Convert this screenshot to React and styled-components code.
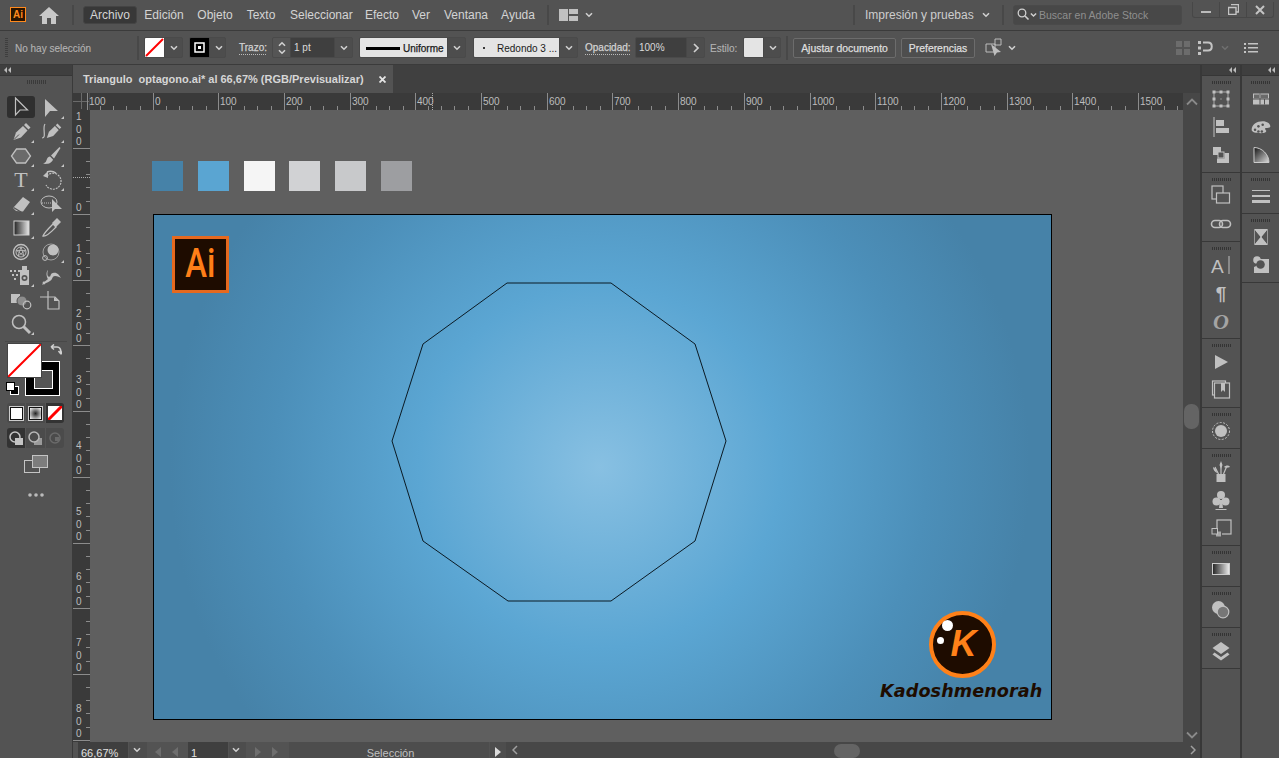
import React from "react";
import styled, { createGlobalStyle } from "styled-components";

const Global = createGlobalStyle`
  html, body { margin: 0; padding: 0; height: 100%; overflow: hidden; background: #535353; }
  #root { height: 100%; }
  * { box-sizing: border-box; }
`;
const FONT = `"Liberation Sans", Arial, sans-serif`;

const Shell = styled.div`
  width: 1279px; height: 758px; display: flex; flex-direction: column; overflow: hidden;
  background: #535353; font-family: ${FONT}; color: #cfcfcf;
`;

/* ---------- top menu ---------- */
const MenuBar = styled.header`
  height: 31px; flex: none; display: flex; align-items: center; background: #535353;
  border-bottom: 1px solid #3b3b3b; padding-bottom: 1px; position: relative;
`;
const AppBadge = styled.div`
  width: 16px; height: 15px; margin-left: 10px; border: 1px solid #ff8a1e; background: #2a1400; color: #ff8a1e;
  font-size: 10px; font-weight: 700; line-height: 13px; text-align: center;
`;
const Spaced = styled.div`
  flex: none; margin-left: ${p => p.$ml || 0}px; display: flex; align-items: center;
`;
const VRule = styled.div`
  flex: none; width: 2px; height: ${p => p.$h || 20}px; margin-left: ${p => p.$ml || 0}px; background: #484848;
`;
const MenuItem = styled.div`
  flex: none; font-size: 12px; line-height: 16px; height: 18px; padding-top: 1px; color: #d4d4d4;
  margin-left: ${p => p.$ml || 0}px; width: ${p => p.$w}px; white-space: nowrap; text-align: center;
  ${p => p.$active && `background:#383838;border:1px solid #444;border-radius:3px;padding-top:0;`}
`;
const WorkspaceLabel = styled.div`
  flex: none; font-size: 12px; color: #cdcdcd; margin-left: ${p => p.$ml}px; width: 108px; white-space: nowrap;
`;
const SearchBox = styled.div`
  flex: none; width: 169px; height: 20px; margin-left: 9px; border: 1px solid #4a4a4a; border-radius: 3px; background: #484848;
  display: flex; align-items: center; padding-left: 3px; font-size: 10.5px; color: #8f8f8f; white-space: nowrap;
`;
const WindowButtons = styled.div`
  flex: none; width: 82px; height: 16px; margin-left: 10px; margin-top: -9px; display: flex;
  border: 1px solid #474747; border-top: 0; border-radius: 0 0 3px 3px;
`;
const WindowButton = styled.div`
  flex: 1; display: flex; align-items: center; justify-content: center;
  & + & { border-left: 1px solid #474747; }
`;

/* ---------- control bar ---------- */
const ControlBar = styled.div`
  height: 34px; flex: none; display: flex; align-items: center; background: #535353; border-bottom: 1px solid #3b3b3b;
`;
const Grip = styled.div`
  flex: none; width: 3px; height: 20px; margin-left: 5px;
  background: repeating-linear-gradient(to bottom, #3e3e3e 0 1px, transparent 1px 2px);
`;
const ControlLabel = styled.div`
  flex: none; font-size: 10px; padding-top: 1px; color: ${p => p.$bold ? "#d2d2d2" : "#b4b4b4"};
  -webkit-text-stroke: ${p => p.$bold ? ".25px" : ".1px"} currentColor;
  margin-left: ${p => p.$ml}px; width: ${p => p.$w}px; white-space: nowrap;
  ${p => p.$dotted && `border-bottom:1px dotted #bbb;line-height:12px;`}
`;
const Drop = styled.div`
  flex: none; height: 21px; margin-left: ${p => p.$ml}px; width: ${p => p.$w}px; display: flex; align-items: stretch;
  border: 1px solid #4a4a4a; border-radius: 2px; background: #4d4d4d; overflow: hidden;
`;
const DropArrow = styled.div`
  flex: none; width: 18px; margin-left: auto; display: flex; align-items: center; justify-content: center;
  border-left: 1px solid #474747;
`;
const Swatch = styled.div`
  flex: none; width: 19px; display: flex; align-items: center; justify-content: center; background: ${p => p.$bg};
`;
const Stepper = styled.div`
  flex: none; width: 18px; display: flex; flex-direction: column; align-items: center; justify-content: center; gap: 2px;
  border-right: 1px solid #474747; background: #555;
`;
const FieldValue = styled.div`
  flex: 1; background: #3f3f3f; font-size: 10px; line-height: 19px; padding-left: 3px; color: #dadada;
`;
const LightCell = styled.div`
  flex: 1; background: #e4e4e4; color: #1a1a1a; font-size: 10px; padding-top: 1px;
  ${p => p.$b && `-webkit-text-stroke: .25px #1a1a1a;`}
  display: flex; align-items: center; white-space: nowrap; overflow: hidden;
`;
const Stroke = styled.div`
  flex: none; width: 34px; height: 3px; background: #000; margin: 0 3px 0 6px;
`;
const Dot = styled.div`
  flex: none; width: 2px; height: 2px; border-radius: 50%; background: #000; margin: 0 12px 0 9px;
`;
const CtlButton = styled.div`
  flex: none; height: 20px; width: ${p => p.$w}px; margin-left: 5px; border: 1px solid #6c6c6c; border-radius: 2px;
  font-size: 10.4px; line-height: 19px; -webkit-text-stroke: .25px #dedede; text-align: center; color: #dedede; background: #4e4e4e; white-space: nowrap;
`;

/* ---------- main ---------- */
const Main = styled.div`
  flex: 1; min-height: 0; display: flex; background: #3a3a3a;
`;
const ToolPanel = styled.aside`
  flex: none; width: 72px; margin-right: 1px; background: #535353; display: flex; flex-direction: column; align-items: stretch;
`;
const CollapseRow = styled.div`
  height: 11px; flex: none; background: #3f3f3f; border-bottom: 1px solid #363636; display: flex; align-items: center;
  justify-content: ${p => p.$right ? "flex-end" : "flex-start"}; padding: 0 ${p => p.$right ? "4px" : 0} 0 ${p => p.$right ? 0 : "4px"};
`;
const GripBar = styled.div`
  flex: none; width: ${p => p.$w || 19}px; height: 4px; margin: ${p => p.$my || "4px"} auto 0;
  background: repeating-linear-gradient(to right, #3a3a3a 0 1px, transparent 1px 2px);
`;
const ToolGrid = styled.div`
  display: grid; grid-template-columns: 28px 28px; grid-auto-rows: 24px; column-gap: 2px; margin: 12px 0 0 7px;
`;
const Tool = styled.div`
  position: relative; display: flex; align-items: center; justify-content: center; height: ${p => p.$sel ? 22 : 24}px;
  border-radius: 3px; background: ${p => p.$sel ? "#2f2f2f" : "transparent"}; color: #c0c0c0;
  ${p => p.$fly && `&::after{content:"";position:absolute;right:1px;bottom:1px;border-style:solid;border-width:0 0 3px 3px;border-color:transparent transparent #c6c6c6 transparent;}`}
`;
const ToolRule = styled.div`
  height: 1px; margin: 5px 5px 0; background: #484848; flex: none;
`;
const FillStroke = styled.div`
  position: relative; height: 54px; margin: 0 0 0 0; flex: none;
`;
const FillBox = styled.div`
  position: absolute; left: 7px; top: 1px; width: 35px; height: 35px; background: #fff; border: 1px solid #444; z-index: 2; overflow: hidden;
`;
const StrokeBox = styled.div`
  position: absolute; left: 25px; top: 19px; width: 35px; height: 35px; background: #000; border: 1px solid #fff;
  &::after { content: ""; position: absolute; left: 8px; top: 8px; width: 17px; height: 17px; border: 1px solid #fff; background: #555; }
`;
const Overlay = styled.div`
  position: absolute; left: ${p => p.$x}px; top: ${p => p.$y}px; display: flex;
`;
const ModeRow = styled.div`
  flex: none; height: 20px; margin: ${p => p.$mt}px 8px 0 7px; display: flex; border-radius: 3px; background: #4b4b4b; overflow: hidden;
`;
const ModeCell = styled.div`
  flex: 1; display: flex; align-items: center; justify-content: center; background: ${p => p.$on ? "#333" : "transparent"};
  & + & { border-left: 1px solid #555; }
`;
const MiniSwatch = styled.div`
  width: 13px; height: 13px; border: 1px solid #111; outline: 1px solid #ccc; background: ${p => p.$bg};
`;
const CenterIcon = styled.div`
  flex: none; display: flex; justify-content: center; margin-top: ${p => p.$mt}px;
`;

/* ---------- document ---------- */
const DocArea = styled.section`
  flex: 1; min-width: 0; display: flex; flex-direction: column; background: #5f5f5f;
`;
const TabBar = styled.div`
  flex: none; height: 28px; background: #404040; display: flex;
`;
const Tab = styled.div`
  width: 320px; background: #535353; display: flex; align-items: center; padding-left: 10px; font-size: 11px; font-weight: 700; color: #d6d6d6; white-space: pre;
`;
const TabClose = styled.span`
  margin-left: auto; margin-right: 7px; display: flex;
`;
const RulerRow = styled.div`
  flex: none; height: 17px; display: flex; background: #3a3a3a;
`;
const Workspace = styled.div`
  flex: 1; min-height: 0; display: flex;
`;
const VRulerWrap = styled.div`
  flex: none; width: 17px; background: #3a3a3a; overflow: hidden; display: flex;
`;
const Canvas = styled.main`
  flex: 1; min-width: 0; background: #5f5f5f; padding: 51px 0 0 62px; overflow: hidden;
`;
const Swatches = styled.div`
  display: flex; gap: 14.8px;
`;
const ColorChip = styled.div`
  width: 31px; height: 30px; background: ${p => p.$c}; flex: none;
`;
const Artboard = styled.div`
  position: relative; width: 899px; height: 506px; margin: 23px 0 0 1px; border: 1px solid #000;
  background: radial-gradient(circle 430px at 446px 252px, #88c0e2 0, #5ba6d3 42%, #4c8fb9 76%, #4682a8 100%);
`;
const Drawing = styled.svg`
  position: absolute; left: 0; top: 0; width: 897px; height: 504px;
`;
const AiLogo = styled.div`
  position: absolute; left: 18px; top: 21px; width: 57px; height: 57px; border: 3px solid #e5691f; background: #1e0c00;
  color: #ff7f18; font-size: 40px; line-height: 50px; text-align: center; font-family: Roboto, ${FONT}; font-weight: 500;
`;
const AiText = styled.span`
  display: inline-block; transform: scaleX(.82);
`;
const BrandCircle = styled.div`
  position: absolute; left: 775px; top: 396px; width: 67px; height: 67px; border-radius: 50%; border: 4px solid #ff8119; background: #1e0c00;
  color: #ff8119; font: italic 700 36px/57px "Liberation Sans", sans-serif; text-align: center; padding-left: 2px;
`;
const BrandDot = styled.div`
  position: absolute; left: ${p => p.$x}px; top: ${p => p.$y}px; width: ${p => p.$s}px; height: ${p => p.$s}px; border-radius: 50%; background: #fff;
`;
const BrandName = styled.div`
  position: absolute; left: 726px; top: 465px; font: italic 700 17.600px/22px "DejaVu Sans", sans-serif; color: #1e0c00; white-space: nowrap; letter-spacing: 0.1px;
`;
const VScroll = styled.div`
  flex: none; width: 17px; background: #474747; display: flex; flex-direction: column; align-items: center; position: relative;
`;
const ScrollThumbV = styled.div`
  position: absolute; top: 294px; left: 1px; width: 15px; height: 25px; border-radius: 7px; background: #646464;
`;
const StatusBar = styled.footer`
  flex: none; height: 16px; background: #535353; display: flex; font-size: 11px; color: #d2d2d2;
`;
const StatusField = styled.div`
  flex: none; width: ${p => p.$w}px; margin-left: ${p => p.$ml || 0}px; background: ${p => p.$bg || "#4d4d4d"}; padding: 5px 0 0 ${p => p.$pl || 3}px;
  line-height: 13px; white-space: nowrap; display: flex; justify-content: ${p => p.$c ? "center" : "flex-start"};
  gap: ${p => p.$gap || 0}px; color: ${p => p.$dim ? "#c0c0c0" : "#e2e2e2"};
`;
const HScroll = styled.div`
  flex: 1; position: relative; background: #474747; display: flex; align-items: center; justify-content: space-between; padding: 0 4px 0 6px;
`;
const ScrollThumbH = styled.div`
  position: absolute; left: 328px; top: 2px; width: 26px; height: 14px; border-radius: 7px; background: #646464;
`;

/* ---------- docks ---------- */
const Dock = styled.aside`
  flex: none; width: ${p => p.$w}px; border-left: 2px solid #383838; background: #535353; display: flex; flex-direction: column;
`;
const DockSection = styled.div`
  flex: none; display: flex; flex-direction: column; align-items: center; padding: 5px 0 3px; border-bottom: 1px solid #383838;
`;
const DockGrip = styled.div`
  flex: none; width: 19px; height: 3px; margin-bottom: 1px;
  background: repeating-linear-gradient(to right, #343434 0 1px, transparent 1px 2px);
`;
const DockCell = styled.div`
  flex: none; height: 28px; width: 100%; display: flex; align-items: center; justify-content: center; color: #c0c0c0;
`;

/* ---------- drawings ---------- */
const Chev = ({ c = "#d0d0d0", up, w = 8 }) => (
  <svg width={w} height="6" viewBox="0 0 8 6" style={{ flex: "none", transform: up ? "scaleY(-1)" : undefined }}>
    <path d="M1 1.200 4 4.200 7 1.200" fill="none" stroke={c} strokeWidth="1.600" />
  </svg>
);
const Collapse = () => (
  <svg width="7" height="6" viewBox="0 0 7 6"><path d="M3 0v6L0 3zM7 0v6L4 3z" fill="#bbb" /></svg>
);
const I = ({ children, s = 24 }) => (
  <svg width={s} height={s} viewBox="0 0 24 24" fill="currentColor" style={{ flex: "none" }}>{children}</svg>
);
const SerifGlyph = styled.text`
  font-family: "Liberation Serif", serif; fill: currentColor;
`;
const SansGlyph = styled.text`
  font-family: "Liberation Sans", sans-serif; fill: currentColor;
`;

const nib = "M4.500 20 7 12.500 14 6l4.500 4.500-6.500 7z";
const tools = [
  [<I><path d="M6.500 3v17l4.500-5h7.500z" fill="none" stroke="currentColor" strokeWidth="1.200" /></I>, 0, 1],
  [<I><path d="M6 3v18l5-6h8z" /></I>, 1],
  [<I><path d={nib} /><path d="M15 5l2-2 4.500 4.500-2 2z" /><path d="M5 19.500 10 14.500" stroke="#535353" fill="none" /></I>, 1],
  [<I><g transform="translate(4 1) scale(.85)"><path d={nib} /><path d="M15 5l2-2 4.500 4.500-2 2z" /></g><path d="M3 18c5 0 0-10 3-14" fill="none" stroke="currentColor" strokeWidth="1.200" /></I>, 1],
  [<I><path d="M7.500 5h9l5 7-5 7h-9l-5-7z" fill="#6a6a6a" stroke="currentColor" strokeWidth="1.300" /></I>, 1],
  [<I><path d="M20.500 3 12 11.500l3 3L21.500 4z" /><path d="M11 12.500c-3 .5-3 3-4 5-.6 1.400-2 1.500-3 2 3 1 8.500.5 10-4z" /></I>, 1],
  [<I><SerifGlyph x="12" y="19" fontSize="22" textAnchor="middle">T</SerifGlyph></I>, 1],
  [<I><path d="M8 8a8 8 0 1 1-1 9" fill="none" stroke="currentColor" strokeWidth="1.200" strokeDasharray="2 1" /><path d="M8 4a10 10 0 0 1 9 1" fill="none" stroke="currentColor" strokeWidth="1.400" /><path d="M4 8 9 3v7z" /></I>, 1],
  [<I><path d="M14 5 21 10 14 19.500 7 19 4 16z" /><path d="M4.500 15.500 12 20" stroke="#535353" strokeWidth="1.200" /></I>, 1],
  [<I><ellipse cx="10" cy="10" rx="8" ry="6" fill="none" stroke="currentColor" /><path d="M13 7 13 20l3-3 7 0z" /><path d="M3 11h10" stroke="currentColor" strokeDasharray="1 1" /></I>],
  [<I><defs><linearGradient id="gt"><stop offset="0" stopColor="#222" /><stop offset="1" stopColor="#e8e8e8" /></linearGradient></defs><rect x="5" y="5" width="15" height="14" fill="url(#gt)" stroke="#d0d0d0" /></I>, 1],
  [<I><path d="M4 20c1-3 8-10 10-12l3 3C14 14 8 21 4 20z" fill="none" stroke="currentColor" strokeWidth="1.300" /><path d="M13 7l5-5 4 4-5 5z" /></I>],
  [<I><circle cx="12" cy="12" r="7.500" fill="none" stroke="currentColor" strokeWidth="1.300" /><circle cx="12" cy="12" r="5" fill="none" stroke="currentColor" /><path d="M12 7l3 9L7.500 10.500h9L9 16z" fill="none" stroke="currentColor" strokeWidth=".8" /></I>],
  [<I><circle cx="14" cy="10" r="5.500" /><circle cx="6" cy="18" r="2.400" fill="none" stroke="currentColor" /><circle cx="12" cy="12" r="8" fill="none" stroke="currentColor" strokeWidth=".7" /></I>, 1],
  [<I><path d="M1 6h2v2H1zM5 6h2v2H5zM9 6h2v2H9zM3 10h2v2H3zM7 10h2v2H7zM5 14h2v2H5z" /><path d="M13 2h5v4h2v15H11V6h2z" /><circle cx="15.500" cy="14" r="3" fill="#535353" /><circle cx="15.500" cy="14" r="1.300" /></I>, 1],
  [<I><path d="M3 21c3-2 5-2 8-4s2-5 5-5 4 1 6 2c-2-3-4-6-8-5-3 .5-2 4-4 5-2-2-2-5-1-8C7 8 7 12 9 15c-2 2-5 3-6 6z" /><circle cx="10" cy="14" r="1.400" /><circle cx="5" cy="19" r="1.400" /></I>],
  [<I><rect x="2" y="6" width="9" height="9" /><circle cx="13" cy="13" r="5" fill="#8d8d8d" stroke="#535353" /><circle cx="18" cy="17" r="3.800" fill="none" stroke="currentColor" strokeWidth="1.200" /></I>],
  [<I><path d="M9 3v6H1M9 9h7l4 4v8H9z" fill="none" stroke="currentColor" strokeWidth="1.200" /><path d="M15 9l5 4h-5z" /></I>],
  [<I><circle cx="10" cy="10" r="6.500" fill="none" stroke="currentColor" strokeWidth="1.500" /><path d="M14.500 14.500 21 21" stroke="currentColor" strokeWidth="3" /></I>, 1],
];

const handles = [[5, 5], [12, 5], [19, 5], [5, 12], [19, 12], [5, 19], [12, 19], [19, 19]];
const TransformIcon = () => <I><rect x="5" y="5" width="14" height="14" fill="none" stroke="currentColor" strokeWidth=".8" />{handles.map(([x, y]) => <rect key={x + "-" + y} x={x - 1.500} y={y - 1.500} width="3" height="3" />)}<rect x="11.500" y="11.500" width="1" height="1" /></I>;
const AlignIcon = () => <I><path d="M5 2v20" stroke="currentColor" /><rect x="7" y="5" width="8" height="6" /><rect x="7" y="13" width="13" height="5" /></I>;
const PathfinderIcon = () => <I><rect x="4" y="4" width="8" height="8" /><rect x="9" y="9" width="6" height="6" fill="#535353" stroke="currentColor" /><path d="M15.500 10H20v10H8v-4.500h7.500z" /></I>;
const ArtboardsIcon = () => <I><rect x="3" y="2" width="11" height="13" fill="none" stroke="currentColor" strokeWidth="1.200" /><rect x="7.500" y="9" width="13" height="10" fill="#535353" stroke="currentColor" strokeWidth="1.200" /></I>;
const LinkIcon = () => <I><rect x="2.500" y="8.500" width="11" height="7" rx="3.500" fill="none" stroke="currentColor" strokeWidth="1.600" /><rect x="10.500" y="8.500" width="11" height="7" rx="3.500" fill="none" stroke="currentColor" strokeWidth="1.600" /></I>;
const CharIcon = () => <I><SansGlyph x="2" y="20" fontSize="19">A</SansGlyph><path d="M20 3v18" stroke="currentColor" /></I>;
const ParaIcon = () => <I><SansGlyph x="12" y="19" fontSize="19" fontWeight="700" textAnchor="middle">¶</SansGlyph></I>;
const OpenTypeIcon = () => <I><SerifGlyph x="12" y="20" fontSize="22" fontWeight="700" fontStyle="italic" textAnchor="middle" style={{ fill: "#a4a4a4" }}>O</SerifGlyph></I>;
const PlayIcon = () => <I><path d="M6 5v14l13-7z" /></I>;
const BookIcon = () => <I><rect x="3.500" y="3" width="13" height="14" fill="none" stroke="currentColor" strokeWidth="1.200" /><rect x="5.500" y="5" width="15" height="15" fill="#535353" stroke="currentColor" strokeWidth="1.200" /><path d="M12 5h4v9l-2-2-2 2z" /></I>;
const AppearanceIcon = () => <I><circle cx="12" cy="12" r="6" /><circle cx="12" cy="12" r="8.500" fill="none" stroke="currentColor" strokeDasharray="2 1.500" /></I>;
const BrushesIcon = () => <I><rect x="7.500" y="14" width="9" height="8" /><path d="M9.500 14 6 7M12 14V3M14.500 14l3-7" stroke="currentColor" strokeWidth="1.200" /><path d="M4 7c2 1 4 3 4 6-2-1-4-3-4-6zM12 1l1.500 4-1.500 4-1.500-4zM15 7c2-2 5-2 6 0-2 1-5 1-6 0z" /></I>;
const ClubIcon = () => <I><circle cx="12" cy="7" r="4" /><circle cx="7.500" cy="13.500" r="4" /><circle cx="16.500" cy="13.500" r="4" /><path d="M11 12h2l1 8h-4z" /><path d="M6.500 21.500h11" stroke="currentColor" /></I>;
const SymbolIcon = () => <I><rect x="8" y="4" width="14" height="14" fill="#535353" stroke="currentColor" strokeWidth="1.200" /><rect x="6.500" y="15" width="6" height="6" stroke="#535353" fill="#a8a8a8" /><rect x="3" y="12.500" width="5.500" height="5.500" fill="#535353" stroke="currentColor" /></I>;
const GradIcon = () => <I><defs><linearGradient id="gd"><stop offset="0" stopColor="#222" /><stop offset="1" stopColor="#eee" /></linearGradient></defs><rect x="3.500" y="6.500" width="17" height="11" fill="url(#gd)" stroke="#ccc" /></I>;
const TranspIcon = () => <I><circle cx="9.500" cy="9.500" r="6.500" /><circle cx="14" cy="14" r="5.800" fill="#777" stroke="currentColor" strokeWidth="1.200" /></I>;
const LayersIcon = () => <I><path d="M12 3 20.500 9 12 15 3.500 9z" /><path d="M5.500 13.500 12 18l6.500-4.500 2 2L12 21.500 3.500 15.500z" /></I>;
const TableIcon = () => <I><path d="M4 6.500h16v11H4z" /><path d="M11 6.500v11M15.500 12v5.500M4 12h16" stroke="#535353" /><rect x="5" y="7.500" width="5" height="4" fill="#6a6a6a" /><rect x="12" y="7.500" width="7" height="4" fill="#6a6a6a" /></I>;
const PaletteIcon = () => <I><g transform="translate(1.800 2) scale(.85)"><path d="M1 15c0-6 6-10 13-10 5 0 9 3 9 6 0 2-3 2-5 2s-1 2 0 3c1 2-2 3-6 3-6 0-11-1-11-4z" /><circle cx="5" cy="15" r="1.500" fill="#535353" /><circle cx="9" cy="17" r="1.500" fill="#535353" /><circle cx="13" cy="17" r="1.500" fill="#535353" /><circle cx="9" cy="11" r="1.500" fill="#535353" /><circle cx="14" cy="9" r="1.500" fill="#535353" /></g></I>;
const GuideIcon = () => <I><defs><linearGradient id="gg" x1="0" y1="0" x2="1" y2="1"><stop offset="0" stopColor="#111" /><stop offset="1" stopColor="#ddd" /></linearGradient></defs><path d="M5 4.500c8 0 15 7 15 15H5z" fill="url(#gg)" stroke="#ccc" /></I>;
const LinesIcon = () => <I><rect x="3" y="6" width="18" height="1" /><rect x="3" y="11" width="18" height="2" /><rect x="3" y="16" width="18" height="3" /></I>;
const HourglassIcon = () => <I><path d="M5.500 4h13L12 12zM5.500 20h13L12 12z" /><path d="M5.500 4l13 16M18.500 4 5.500 20" stroke="#ddd" strokeWidth=".6" /><path d="M5.500 4v16M18.500 4v16" stroke="#999" /></I>;
const MergeIcon = () => <I><path d="M9 6h11v14H5v-6a6 6 0 0 0 4-8z" /><circle cx="8" cy="7" r="3.800" /><circle cx="11.500" cy="11.500" r="4.300" fill="#535353" /></I>;

const dock1 = [
  [<TransformIcon />, <AlignIcon />, <PathfinderIcon />],
  [<ArtboardsIcon />, <LinkIcon />],
  [<CharIcon />, <ParaIcon />, <OpenTypeIcon />],
  [<PlayIcon />, <BookIcon />],
  [<AppearanceIcon />],
  [<BrushesIcon />, <ClubIcon />, <SymbolIcon />],
  [<GradIcon />],
  [<TranspIcon />],
  [<LayersIcon />],
];
const dock2 = [
  [<TableIcon />, <PaletteIcon />, <GuideIcon />],
  [<LinesIcon />],
  [<HourglassIcon />, <MergeIcon />],
];

const SCALE = 65.7;
const hMarks = Array.from({ length: 17 }, (_, i) => i - 1);
const RulerH = () => (
  <svg width="1110" height="17" style={{ flex: "none", display: "block" }}>
    <path d="M0 8.500h16M8.500 0v16" stroke="#6a6a6a" />
    <path d="M16.500 0v17" stroke="#4a4a4a" />
    {hMarks.map(k => {
      const x = Math.round(79.500 + k * SCALE);
      return (
        <g key={k}>
          <path d={`M${x + 0.5} 0v17`} stroke="#8c8c8c" />
          {[1, 2, 3, 4].map(t => {
            const tx = Math.round(x + (t * SCALE) / 5);
            return tx < 1110 ? <path key={t} d={`M${tx + 0.5} 13v4`} stroke="#8c8c8c" /> : null;
          })}
          <text x={x + 2} y="12" fontSize="10" fill="#bdbdbd" fontFamily={FONT}>{Math.abs(k * 100)}</text>
        </g>
      );
    })}
    <path d="M359.500 0v17" stroke="#aaa" strokeDasharray="1 1" />
  </svg>
);
const vMarks = Array.from({ length: 10 }, (_, i) => i - 1);
const RulerV = () => (
  <svg width="17" height="632" style={{ flex: "none", display: "block" }}>
    {vMarks.map(k => {
      const y = Math.round(104 + k * SCALE);
      const digits = String(Math.abs(k * 100)).split("");
      return (
        <g key={k}>
          <path d={`M0 ${y + 0.5}h17`} stroke="#8c8c8c" />
          {[1, 2, 3, 4].map(t => <path key={t} d={`M13 ${Math.round(y + (t * SCALE) / 5) + 0.5}h4`} stroke="#8c8c8c" />)}
          {digits.map((d, i) => (
            <text key={i} x="3" y={y - 3 - (digits.length - 1 - i) * 12.5} fontSize="10" fill="#bdbdbd" fontFamily={FONT}>{d}</text>
          ))}
        </g>
      );
    })}
    <path d="M0 67.500h17" stroke="#aaa" strokeDasharray="1 1" />
  </svg>
);

const Tri = ({ dir = "r", on }) => (
  <svg width="8" height="10" viewBox="0 0 8 10" style={{ flex: "none", transform: dir === "l" ? "scaleX(-1)" : undefined }}>
    <path d="M1 0v10l6-5z" fill={on ? "#dcdcdc" : "#6e6e6e"} />
  </svg>
);

export default function App() {
  return (
    <Shell>
      <Global />
      <MenuBar>
        <AppBadge>Ai</AppBadge>
        <Spaced $ml={13}>
          <svg width="20" height="18" viewBox="0 0 20 18"><path d="M10 1 0 10h3v8h5v-6h4v6h5v-8h3z" fill="#c8c8c8" /></svg>
        </Spaced>
        <VRule $ml={13} />
        <MenuItem $active $ml={9} $w={54}>Archivo</MenuItem>
        <MenuItem $ml={6} $w={42}>Edición</MenuItem>
        <MenuItem $ml={11} $w={38}>Objeto</MenuItem>
        <MenuItem $ml={11} $w={32}>Texto</MenuItem>
        <MenuItem $ml={13} $w={62}>Seleccionar</MenuItem>
        <MenuItem $ml={12} $w={36}>Efecto</MenuItem>
        <MenuItem $ml={11} $w={20}>Ver</MenuItem>
        <MenuItem $ml={12} $w={46}>Ventana</MenuItem>
        <MenuItem $ml={11} $w={36}>Ayuda</MenuItem>
        <VRule $ml={11} />
        <Spaced $ml={10}>
          <svg width="19" height="14" viewBox="0 0 19 14"><path d="M0 1h9v12H0zM10 1h9v5h-9zM10 8h9v5h-9z" fill="#c0c0c0" /></svg>
        </Spaced>
        <Spaced $ml={7}><Chev /></Spaced>
        <VRule $ml={260} />
        <WorkspaceLabel $ml={10}>Impresión y pruebas</WorkspaceLabel>
        <Spaced $ml={9}><Chev /></Spaced>
        <VRule $ml={12} />
        <SearchBox>
          <svg width="13" height="13" viewBox="0 0 13 13" style={{ flex: "none" }}><circle cx="5" cy="5" r="3.800" fill="none" stroke="#d0d0d0" strokeWidth="1.300" /><path d="M8 8l3.500 3.500" stroke="#d0d0d0" strokeWidth="1.600" /></svg>
          <Chev w={7} />
          <span style={{ marginLeft: 2 }}>Buscar en Adobe Stock</span>
        </SearchBox>
        <WindowButtons>
          <WindowButton><svg width="10" height="10" viewBox="0 0 10 10"><rect y="6" width="10" height="2" fill="#bbb" /></svg></WindowButton>
          <WindowButton><svg width="11" height="11" viewBox="0 0 11 11"><path d="M3 .5h7.500V8H8M.5 3.500H8V10.500H.5z" fill="none" stroke="#c4c4c4" strokeWidth="1.400" /></svg></WindowButton>
          <WindowButton><svg width="10" height="10" viewBox="0 0 10 10"><path d="M1 1l8 8M9 1 1 9" stroke="#c4c4c4" strokeWidth="2" /></svg></WindowButton>
        </WindowButtons>
      </MenuBar>

      <ControlBar>
        <Grip />
        <ControlLabel $ml={7} $w={115}>No hay selección</ControlLabel>
        <VRule $ml={7} $h={24} />
        <Drop $ml={5} $w={39}>
          <Swatch $bg="#fff"><svg width="19" height="19"><path d="M1 18 18 1" stroke="#f00" strokeWidth="2" /></svg></Swatch>
          <DropArrow><Chev /></DropArrow>
        </Drop>
        <Drop $ml={6} $w={37}>
          <Swatch $bg="#000"><svg width="11" height="11"><rect x="1" y="1" width="9" height="9" fill="none" stroke="#fff" strokeWidth="1.500" /><rect x="4" y="4" width="3" height="3" fill="#fff" /></svg></Swatch>
          <DropArrow><Chev /></DropArrow>
        </Drop>
        <ControlLabel $ml={13} $w={27} $bold $dotted>Trazo:</ControlLabel>
        <Drop $ml={6} $w={81}>
          <Stepper><Chev up /><Chev /></Stepper>
          <FieldValue>1 pt</FieldValue>
          <DropArrow style={{ background: "#4d4d4d" }}><Chev /></DropArrow>
        </Drop>
        <Drop $ml={6} $w={107}>
          <LightCell $b><Stroke />Uniforme</LightCell>
          <DropArrow><Chev /></DropArrow>
        </Drop>
        <Drop $ml={7} $w={105}>
          <LightCell><Dot />Redondo 3 ...</LightCell>
          <DropArrow><Chev /></DropArrow>
        </Drop>
        <ControlLabel $ml={7} $w={45} $bold $dotted>Opacidad:</ControlLabel>
        <Drop $ml={5} $w={70}>
          <FieldValue>100%</FieldValue>
          <DropArrow><svg width="6" height="10" viewBox="0 0 6 10"><path d="M1 1l4 4-4 4" fill="none" stroke="#d0d0d0" strokeWidth="1.600" /></svg></DropArrow>
        </Drop>
        <ControlLabel $ml={5} $w={27}>Estilo:</ControlLabel>
        <Drop $ml={6} $w={38}>
          <Swatch $bg="#e4e4e4" />
          <DropArrow><Chev /></DropArrow>
        </Drop>
        <VRule $ml={5} $h={24} />
        <CtlButton $w={103}>Ajustar documento</CtlButton>
        <CtlButton $w={74}>Preferencias</CtlButton>
        <Spaced $ml={10}>
          <svg width="18" height="19" viewBox="0 0 18 19"><path d="M1 6h9v8H1zM10 1h6v6h-6z" fill="none" stroke="#bdbdbd" /><path d="M6 6l10 8-4 .5L9.500 18z" fill="#bdbdbd" /></svg>
        </Spaced>
        <Spaced $ml={5}><Chev /></Spaced>
        <Spaced $ml={160}>
          <svg width="14" height="14" viewBox="0 0 14 14"><path d="M0 0h6v6H0zM8 0h6v6H8zM0 8h6v6H0zM8 8h6v6H8z" fill="#6c6c6c" /></svg>
        </Spaced>
        <Spaced $ml={8}>
          <svg width="16" height="16" viewBox="0 0 16 16"><path d="M0 1h3v3H0zM0 6.500h3v3H0zM0 12h3v3H0z" fill="#c4c4c4" /><path d="M5 2.500h5c5 0 5 8 0 8H5" fill="none" stroke="#c4c4c4" strokeWidth="2" /></svg>
        </Spaced>
        <Spaced $ml={7}><Chev c="#6f6f6f" /></Spaced>
        <Spaced $ml={15}>
          <svg width="14" height="12" viewBox="0 0 14 12"><path d="M0 1h2v2H0zM4 1h10v1.500H4zM0 5h2v2H0zM4 5h10v1.500H4zM0 9h2v2H0zM4 9h10v1.500H4z" fill="#c4c4c4" /></svg>
        </Spaced>
      </ControlBar>

      <Main>
        <ToolPanel>
          <CollapseRow><Collapse /></CollapseRow>
          <GripBar />
          <ToolGrid>
            {tools.map(([icon, fly, sel], i) => <Tool key={i} $fly={fly} $sel={sel}>{icon}</Tool>)}
          </ToolGrid>
          <ToolRule />
          <FillStroke>
            <FillBox><svg width="33" height="33"><path d="M0 33 33 0" stroke="#f00" strokeWidth="2" /></svg></FillBox>
            <StrokeBox />
            <Overlay $x={50} $y={2}>
              <svg width="12" height="13" viewBox="0 0 12 13"><path d="M1 3h6c3 0 4 2 4 6M1 3l3-2.500M1 3l3 2.500M11 10l-2.500-3M11 10l2-3" fill="none" stroke="#d0d0d0" strokeWidth="1.600" /></svg>
            </Overlay>
            <Overlay $x={6} $y={40}>
              <svg width="13" height="13" viewBox="0 0 13 13"><rect x="4.500" y="4.500" width="8" height="8" fill="#000" stroke="#fff" /><rect x=".5" y=".5" width="8" height="8" fill="#fff" stroke="#000" /></svg>
            </Overlay>
          </FillStroke>
          <ModeRow $mt={7}>
            <ModeCell><MiniSwatch $bg="#fff" /></ModeCell>
            <ModeCell><MiniSwatch $bg="radial-gradient(circle,#222,#fff)" /></ModeCell>
            <ModeCell $on><svg width="14" height="14"><rect width="14" height="14" fill="#fff" /><path d="M0 14 14 0" stroke="#f00" strokeWidth="3" /></svg></ModeCell>
          </ModeRow>
          <ModeRow $mt={5}>
            <ModeCell $on><svg width="14" height="14"><circle cx="6" cy="6" r="5" fill="none" stroke="#c4c4c4" strokeWidth="1.500" /><rect x="6" y="7" width="8" height="7" fill="#c4c4c4" /></svg></ModeCell>
            <ModeCell><svg width="14" height="14"><rect x="6" y="7" width="8" height="7" fill="#9a9a9a" /><circle cx="6" cy="6" r="5" fill="#4b4b4b" stroke="#b8b8b8" strokeWidth="1.500" /></svg></ModeCell>
            <ModeCell><svg width="14" height="14"><circle cx="7" cy="7" r="5" fill="none" stroke="#6a6a6a" strokeWidth="1.500" /><rect x="7" y="6" width="4" height="4" fill="#6a6a6a" /></svg></ModeCell>
          </ModeRow>
          <CenterIcon $mt={7}>
            <svg width="24" height="18" viewBox="0 0 24 18"><rect x=".5" y="5.500" width="15" height="12" fill="none" stroke="#c4c4c4" /><rect x="8.500" y=".5" width="15" height="12" fill="#7d7d7d" stroke="#c4c4c4" /></svg>
          </CenterIcon>
          <CenterIcon $mt={20}>
            <svg width="16" height="4" viewBox="0 0 16 4"><circle cx="2" cy="2" r="1.800" fill="#bbb" /><circle cx="8" cy="2" r="1.800" fill="#bbb" /><circle cx="14" cy="2" r="1.800" fill="#bbb" /></svg>
          </CenterIcon>
        </ToolPanel>

        <DocArea>
          <TabBar>
            <Tab>
              Triangulo  optagono.ai* al 66,67% (RGB/Previsualizar)
              <TabClose><svg width="7" height="7" viewBox="0 0 7 7"><path d="M.5.5l6 6M6.500.5l-6 6" stroke="#e4e4e4" strokeWidth="1.800" /></svg></TabClose>
            </Tab>
          </TabBar>
          <RulerRow>
            <RulerH />
            <VScroll><svg width="12" height="8" viewBox="0 0 12 8" style={{ marginTop: 5 }}><path d="M1 6.500 6 1.500l5 5" fill="none" stroke="#8a8a8a" strokeWidth="1.800" /></svg></VScroll>
          </RulerRow>
          <Workspace>
            <VRulerWrap><RulerV /></VRulerWrap>
            <Canvas>
              <Swatches>
                {["#4682a8", "#5aa5d2", "#f5f5f5", "#d1d2d4", "#c8c9cb", "#9d9ea1"].map(c => <ColorChip key={c} $c={c} />)}
              </Swatches>
              <Artboard>
                <Drawing viewBox="0 0 897 504">
                  <polygon points="353,68 457,68 541,129 572,226 541,326 457,386 354,386 269,326 238,226 269,129" fill="none" stroke="#0b1a24" strokeWidth="1" />
                </Drawing>
                <AiLogo><AiText>Ai</AiText></AiLogo>
                <BrandCircle>K<BrandDot $x={9} $y={5} $s={11} /><BrandDot $x={4} $y={22} $s={7} /></BrandCircle>
                <BrandName>Kadoshmenorah</BrandName>
              </Artboard>
            </Canvas>
            <VScroll>
              <ScrollThumbV />
              <svg width="12" height="8" viewBox="0 0 12 8" style={{ marginTop: "auto", marginBottom: 3 }}><path d="M1 1.500 6 6.500l5-5" fill="none" stroke="#8a8a8a" strokeWidth="1.800" /></svg>
            </VScroll>
          </Workspace>
          <StatusBar>
            <StatusField $ml={5} $w={50} $bg="#3f3f3f">66,67%</StatusField>
            <StatusField $ml={1} $w={18} $pl={4}><Chev /></StatusField>
            <StatusField $ml={5} $w={36} $bg="transparent" $pl={2} $gap={9}><Tri dir="l" /><Tri dir="l" /></StatusField>
            <StatusField $w={40} $bg="#3f3f3f" $pl={3}>1</StatusField>
            <StatusField $ml={1} $w={17} $pl={3}><Chev /></StatusField>
            <StatusField $ml={5} $w={37} $bg="transparent" $pl={3} $gap={9}><Tri /><Tri /></StatusField>
            <StatusField $ml={1} $w={200} $c $dim>Selección</StatusField>
            <StatusField $ml={1} $w={16} $pl={4}><Tri on /></StatusField>
            <HScroll>
              <svg width="6" height="10" viewBox="0 0 6 10"><path d="M5 1 1 5l4 4" fill="none" stroke="#a0a0a0" strokeWidth="1.500" /></svg>
              <ScrollThumbH />
              <svg width="6" height="10" viewBox="0 0 6 10"><path d="M1 1l4 4-4 4" fill="none" stroke="#a0a0a0" strokeWidth="1.500" /></svg>
            </HScroll>
          </StatusBar>
        </DocArea>

        <Dock $w={40}>
          <CollapseRow $right><Collapse /></CollapseRow>
          {dock1.map((cells, i) => (
            <DockSection key={i}><DockGrip />{cells.map((c, j) => <DockCell key={j}>{c}</DockCell>)}</DockSection>
          ))}
        </Dock>
        <Dock $w={39}>
          <CollapseRow $right><Collapse /></CollapseRow>
          {dock2.map((cells, i) => (
            <DockSection key={i}><DockGrip />{cells.map((c, j) => <DockCell key={j}>{c}</DockCell>)}</DockSection>
          ))}
        </Dock>
      </Main>
    </Shell>
  );
}
